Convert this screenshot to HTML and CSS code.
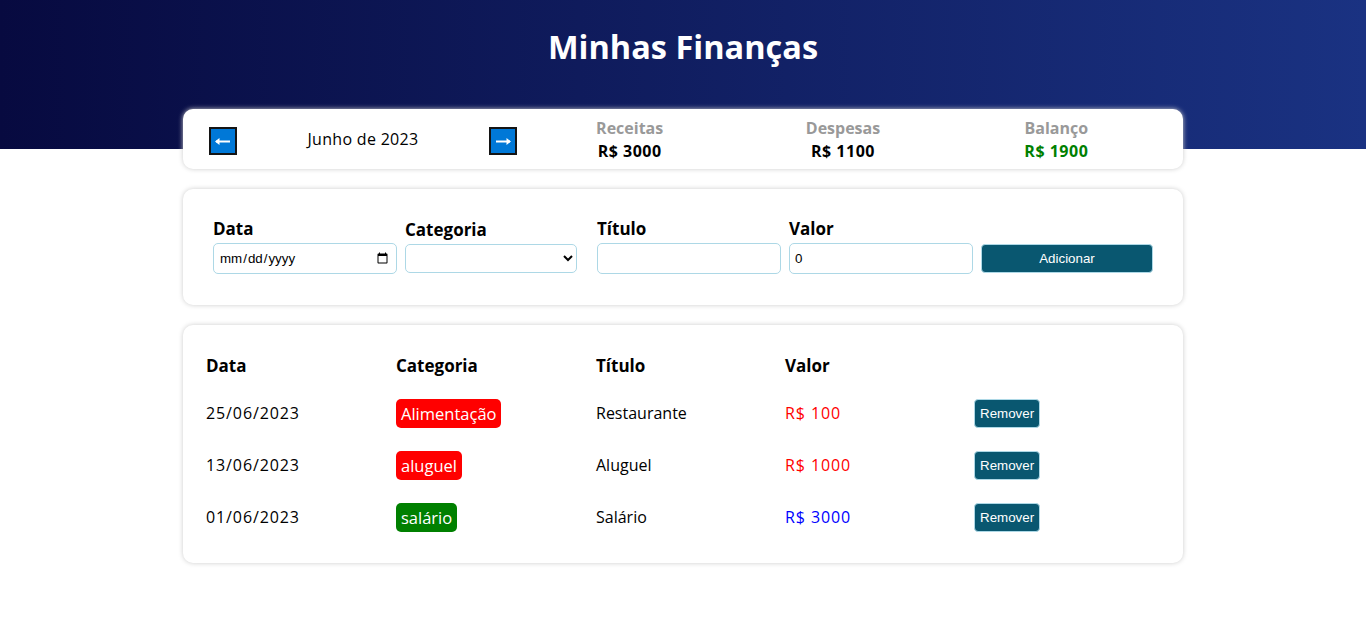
FILE: index.html
```html
<!DOCTYPE html>
<html lang="pt-BR">
<head>
<meta charset="utf-8">
<title>Minhas Finanças</title>
<link rel="stylesheet" href="styles.css">
</head>
<body>
<header class="header">
  <h1 class="header-title">Minhas Finanças</h1>
</header>
<main class="body">
  <section class="card info">
    <div class="month-area">
      <button class="month-arrow" aria-label="Mês anterior">
        <svg width="24" height="24" viewBox="0 0 24 24"><path d="M5 12.5H19" stroke="#fff" stroke-width="2" fill="none"/><path d="M4 12.5L8.5 9V16Z" fill="#fff"/></svg>
      </button>
      <div class="month-title">Junho de 2023</div>
      <button class="month-arrow" aria-label="Próximo mês">
        <svg width="24" height="24" viewBox="0 0 24 24"><path d="M5 12.5H19" stroke="#fff" stroke-width="2" fill="none"/><path d="M20 12.5L15.5 9V16Z" fill="#fff"/></svg>
      </button>
    </div>
    <div class="resume-area">
      <div class="resume-item">
        <div class="resume-title">Receitas</div>
        <div class="resume-info">R$ 3000</div>
      </div>
      <div class="resume-item">
        <div class="resume-title">Despesas</div>
        <div class="resume-info">R$ 1100</div>
      </div>
      <div class="resume-item">
        <div class="resume-title">Balanço</div>
        <div class="resume-info positive">R$ 1900</div>
      </div>
    </div>
  </section>

  <section class="card form">
    <label class="field">
      <span class="field-title">Data</span>
      <input class="field-input" type="date">
    </label>
    <label class="field">
      <span class="field-title">Categoria</span>
      <select class="field-select"><option></option></select>
    </label>
    <label class="field">
      <span class="field-title">Título</span>
      <input class="field-input" type="text">
    </label>
    <label class="field">
      <span class="field-title">Valor</span>
      <input class="field-input" type="number" value="0">
    </label>
    <div class="field field-button">
      <button class="add-button">Adicionar</button>
    </div>
  </section>

  <section class="card table">
    <div class="row head">
      <div>Data</div>
      <div>Categoria</div>
      <div>Título</div>
      <div>Valor</div>
      <div></div>
    </div>
    <div class="row">
      <div class="num">25/06/2023</div>
      <div><span class="badge expense">Alimentação</span></div>
      <div>Restaurante</div>
      <div class="num value-expense">R$ 100</div>
      <div><button class="remove-button">Remover</button></div>
    </div>
    <div class="row">
      <div class="num">13/06/2023</div>
      <div><span class="badge expense">aluguel</span></div>
      <div>Aluguel</div>
      <div class="num value-expense">R$ 1000</div>
      <div><button class="remove-button">Remover</button></div>
    </div>
    <div class="row">
      <div class="num">01/06/2023</div>
      <div><span class="badge income">salário</span></div>
      <div>Salário</div>
      <div class="num value-income">R$ 3000</div>
      <div><button class="remove-button">Remover</button></div>
    </div>
  </section>
</main>
</body>
</html>
```

FILE: styles.css
```css
* {
  box-sizing: border-box;
}

body {
  margin: 0;
  font-family: "Open Sans", "DejaVu Sans", sans-serif;
  color: #000;
  background: #fff;
}

.header {
  height: 149px;
  padding-top: 28px;
  background: linear-gradient(90deg, #070a40, #1a3282);
  text-align: center;
}

.header-title {
  margin: 0;
  color: #fff;
  font-size: 32.5px;
  line-height: 38px;
  font-weight: 700;
}

.body {
  width: 1000px;
  margin: -40px auto 0;
}

.card {
  background: #fff;
  border-radius: 10px;
  box-shadow: 0 0 5px #ccc;
  margin-bottom: 20px;
}

/* Info card */
.info {
  display: flex;
  align-items: center;
  height: 60px;
  padding: 6px 20px;
}

.month-area {
  flex: 1;
  display: flex;
  align-items: center;
}

.month-arrow {
  width: 28px;
  height: 28px;
  margin: 4px 6px 0;
  padding: 0;
  border: 2px solid #141414;
  background: #0078d7;
  display: flex;
  align-items: center;
  justify-content: center;
  cursor: pointer;
}

.month-title {
  flex: 1;
  text-align: center;
  font-size: 16px;
  line-height: 22px;
  letter-spacing: 0.3px;
}

.resume-area {
  flex: 2;
  display: flex;
  padding-top: 1px;
}

.resume-item {
  flex: 1;
  text-align: center;
}

.resume-title {
  color: #999;
  font-weight: 700;
  font-size: 16px;
  line-height: 22px;
}

.resume-info {
  font-weight: 700;
  font-size: 16px;
  line-height: 24px;
  letter-spacing: 0.5px;
}

.resume-info.positive {
  color: #008000;
}

/* Form card */
.form {
  display: grid;
  grid-template-columns: 184px 184px 184px 184px 172px;
  column-gap: 8px;
  align-items: center;
  padding: 29px 30px 31px;
}

.field {
  display: flex;
  flex-direction: column;
}

.field-button {
  align-self: end;
  padding-bottom: 1px;
}

.field-title {
  font-weight: 700;
  font-size: 17px;
  line-height: 22px;
  margin-bottom: 3px;
}

.field-input,
.field-select {
  height: 31px;
  padding: 0 5px;
  border: 1px solid #add8e6;
  border-radius: 5px;
  font-family: "Liberation Sans", Arial, sans-serif;
  font-size: 13.33px;
  background: #fff;
}

.field-select {
  width: 172px;
  height: 29px;
}

.add-button {
  width: 172px;
  height: 29px;
  border: 1px solid #add8e6;
  border-radius: 4px;
  background: #095770;
  color: #fff;
  font-family: "Liberation Sans", Arial, sans-serif;
  font-size: 13.33px;
  cursor: pointer;
}

/* Table card */
.table {
  padding: 20px 23px 20px 23px;
}

.row {
  display: grid;
  grid-template-columns: 190px 200px 189px 189px 1fr;
  align-items: center;
  height: 52px;
  font-size: 16px;
  line-height: 22px;
}

.row.head {
  height: 42px;
  font-weight: 700;
  font-size: 17px;
}

.num {
  letter-spacing: 0.9px;
}

.badge {
  display: inline-block;
  padding: 3px 5px;
  border-radius: 5px;
  color: #fff;
  font-size: 16.5px;
  line-height: 23px;
}

.badge.expense {
  background: #ff0000;
}

.badge.income {
  background: #008000;
}

.value-expense {
  color: #ff0000;
}

.value-income {
  color: #0000ff;
}

.remove-button {
  height: 29px;
  padding: 0 5px;
  border: 1px solid #add8e6;
  border-radius: 4px;
  background: #095770;
  color: #fff;
  font-family: "Liberation Sans", Arial, sans-serif;
  font-size: 13.33px;
  cursor: pointer;
}
```
